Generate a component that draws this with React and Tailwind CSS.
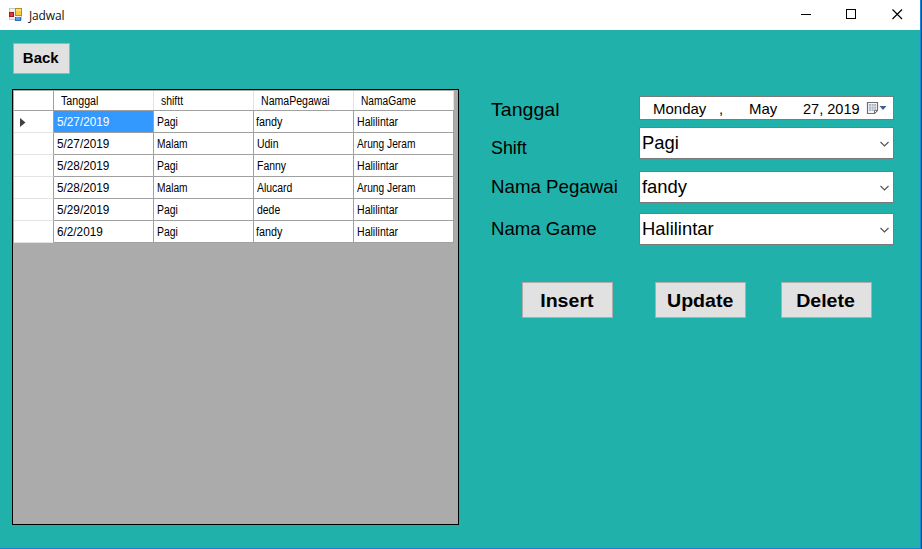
import React from "react";

const rows = [
  ["5/27/2019", "Pagi", "fandy", "Halilintar"],
  ["5/27/2019", "Malam", "Udin", "Arung Jeram"],
  ["5/28/2019", "Pagi", "Fanny", "Halilintar"],
  ["5/28/2019", "Malam", "Alucard", "Arung Jeram"],
  ["5/29/2019", "Pagi", "dede", "Halilintar"],
  ["6/2/2019", "Pagi", "fandy", "Halilintar"],
];

const headers = [
  ["Tanggal", "scale-x-[0.89]"],
  ["shiftt", "scale-x-[0.87]"],
  ["NamaPegawai", "scale-x-[0.88]"],
  ["NamaGame", "scale-x-[0.85]"],
];

// Condensed widths of the cell texts
const widths = {
  Halilintar: "scale-x-[0.88]",
  "Arung Jeram": "scale-x-[0.85]",
  Malam: "scale-x-[0.85]",
  fandy: "scale-x-[0.9]",
};

function Text({ children, className = "" }) {
  return <span className={"inline-block origin-left whitespace-nowrap " + className}>{children}</span>;
}

function FormIcon() {
  return (
    <svg width="15" height="15" viewBox="0 0 15 15" shapeRendering="crispEdges">
      <rect x="0.5" y="0.5" width="12" height="11" fill="#f0f0f0" stroke="#c8c8c8" />
      <rect x="6" y="0" width="7" height="8" fill="#c08c1c" />
      <rect x="7" y="1" width="5" height="6" fill="#f7cb3c" />
      <rect x="7" y="1" width="5" height="2" fill="#fde07a" />
      <rect x="0" y="4" width="5" height="5" fill="#a01818" />
      <rect x="1" y="5" width="3" height="3" fill="#dc3a32" />
      <rect x="6" y="9" width="6" height="4" fill="#3468b8" />
      <rect x="7" y="9" width="4" height="3" fill="#5b98ec" />
    </svg>
  );
}

function TitleBar() {
  return (
    <div className="flex h-[30px] shrink-0 items-center bg-white pl-[9px]">
      <FormIcon />
      <span className="ml-[5px] mt-px font-['Open_Sans',sans-serif] text-[12px] leading-4 text-[#111] tracking-[-0.15px]">Jadwal</span>
      <svg className="ml-auto mr-[17px]" width="102" height="12" viewBox="0 0 102 12" shapeRendering="crispEdges" stroke="#000" fill="none">
        <path d="M0 5.5H10" />
        <rect x="45.5" y="0.5" width="9" height="9" />
        <path d="M91.5 0.5L101 10M101 0.5L91.5 10" shapeRendering="auto" strokeWidth="1.2" />
      </svg>
    </div>
  );
}

function Grid() {
  return (
    <div className="h-[436px] w-[447px] shrink-0 border border-black bg-[#ababab] pl-px pt-px text-[12px] leading-[14px] text-black">
      <div className="flex h-5 w-[440px] border-b border-[#a0a0a0] bg-white">
        <div className="w-10 border-r border-[#a0a0a0]" />
        {headers.map(([name, cls]) => (
          <div key={name} className="w-[100px] border-r border-[#e3e3e3] pl-[7px] pt-[3px]">
            <Text className={cls}>{name}</Text>
          </div>
        ))}
      </div>
      {rows.map((row, r) => (
        <div key={r} className="flex h-[22px] w-[440px] bg-white">
          <div className="flex w-10 items-center border-b border-r border-b-[#e3e3e3] border-r-[#a0a0a0] pl-1.5 pt-px">
            {r === 0 && (
              <svg width="6" height="9" viewBox="0 0 6 9"><path d="M0 0L5.5 4.5L0 9Z" fill="#404040" /></svg>
            )}
          </div>
          {row.map((text, c) => (
            <div
              key={c}
              className={
                "w-[100px] border-b border-r border-[#a0a0a0] pt-1 " +
                (text === "fandy" ? "pl-[2px]" : "pl-[3px]") +
                (r === 0 && c === 0 ? " bg-[#3399ff] text-white" : "")
              }
            >
              <Text className={c === 0 ? "scale-x-[0.98]" : widths[text] || "scale-x-[0.87]"}>{text}</Text>
            </div>
          ))}
        </div>
      ))}
    </div>
  );
}

function Combo({ value, className }) {
  return (
    <div className={"flex h-8 w-[255px] justify-between border border-[#7a7a7a] bg-white pl-0.5 pr-1 " + className}>
      <Text className="mt-1 scale-x-[0.97] text-[19px] leading-[22px]">{value}</Text>
      <svg className="mt-3" width="9" height="9" viewBox="0 0 9 9"><path d="M0.5 2L4.5 6L8.5 2" fill="none" stroke="#555" strokeWidth="1.2" /></svg>
    </div>
  );
}

function DatePicker() {
  return (
    <div className="flex h-6 w-[255px] items-center border border-[#7a7a7a] bg-white text-[15px] leading-[18px]">
      <div className="ml-[13px] w-[66px] pt-0.5">Monday</div>
      <div className="w-[30px] pt-0.5">,</div>
      <div className="w-[54px] pt-0.5">May</div>
      <div className="w-[63px] pt-0.5"><Text className="scale-x-[0.97]">27, 2019</Text></div>
      <svg width="21" height="14" viewBox="0 0 21 14">
        <path d="M1.5 1.5H11.5V9.5L8.5 12.5H1.5Z" fill="#f5f7fa" stroke="#776d6d" strokeWidth="1.2" />
        <path d="M3 3H10V10H3Z" fill="#a9b7c9" />
        <path d="M3 5.5H10M3 8H10M5.5 3V10M8 3V10" stroke="#f5f7fa" strokeWidth="0.5" />
        <path d="M8.5 12.5V9.5H11.5Z" fill="#fff" stroke="#776d6d" />
        <path d="M13.5 5H20.5L17 9Z" fill="#41608f" />
      </svg>
    </div>
  );
}

function Action({ children, className = "" }) {
  return (
    <button className={"flex h-9 w-[91px] items-center justify-center border border-[#adadad] bg-[#e1e1e1] pr-px pt-0.5 text-[19px] font-bold leading-[22px] " + className}>
      <span className="inline-block scale-x-[1.03]">{children}</span>
    </button>
  );
}

export default function App() {
  return (
    <div className="flex h-[549px] w-[922px] border-r border-[#31485c] bg-[#20b2aa] font-['Liberation_Sans',Arial,sans-serif] text-black">
      <div className="flex w-[921px] flex-col border-b border-r border-[#1883d7]">
        <TitleBar />
        <div className="px-3 pt-[13px]">
          <button className="ml-px flex h-[31px] w-[57px] items-center justify-center border border-[#adadad] bg-[#e1e1e1] pb-px pr-px text-[14px] font-bold leading-4">
            <span className="inline-block scale-x-[1.07]">Back</span>
          </button>
          <div className="mt-[15px] flex">
            <Grid />
            <div className="ml-8 w-[403px] pt-[7px]">
              <div className="flex">
                <div className="flex w-[148px] flex-col items-start text-[19px] leading-[22px]">
                  <Text className="mt-[3px] scale-x-[1.03]">Tanggal</Text>
                  <Text className="mt-4 scale-x-[0.94]">Shift</Text>
                  <Text className="mt-[17px] scale-x-[0.985]">Nama Pegawai</Text>
                  <Text className="mt-5 scale-x-[0.98]">Nama Game</Text>
                </div>
                <div>
                  <DatePicker />
                  <Combo value="Pagi" className="mt-[7px]" />
                  <Combo value="fandy" className="mt-3" />
                  <Combo value="Halilintar" className="mt-2.5" />
                </div>
              </div>
              <div className="ml-[31px] mt-[37px] flex">
                <Action>Insert</Action>
                <Action className="ml-[42px]">Update</Action>
                <Action className="ml-[35px]">Delete</Action>
              </div>
            </div>
          </div>
        </div>
      </div>
    </div>
  );
}
